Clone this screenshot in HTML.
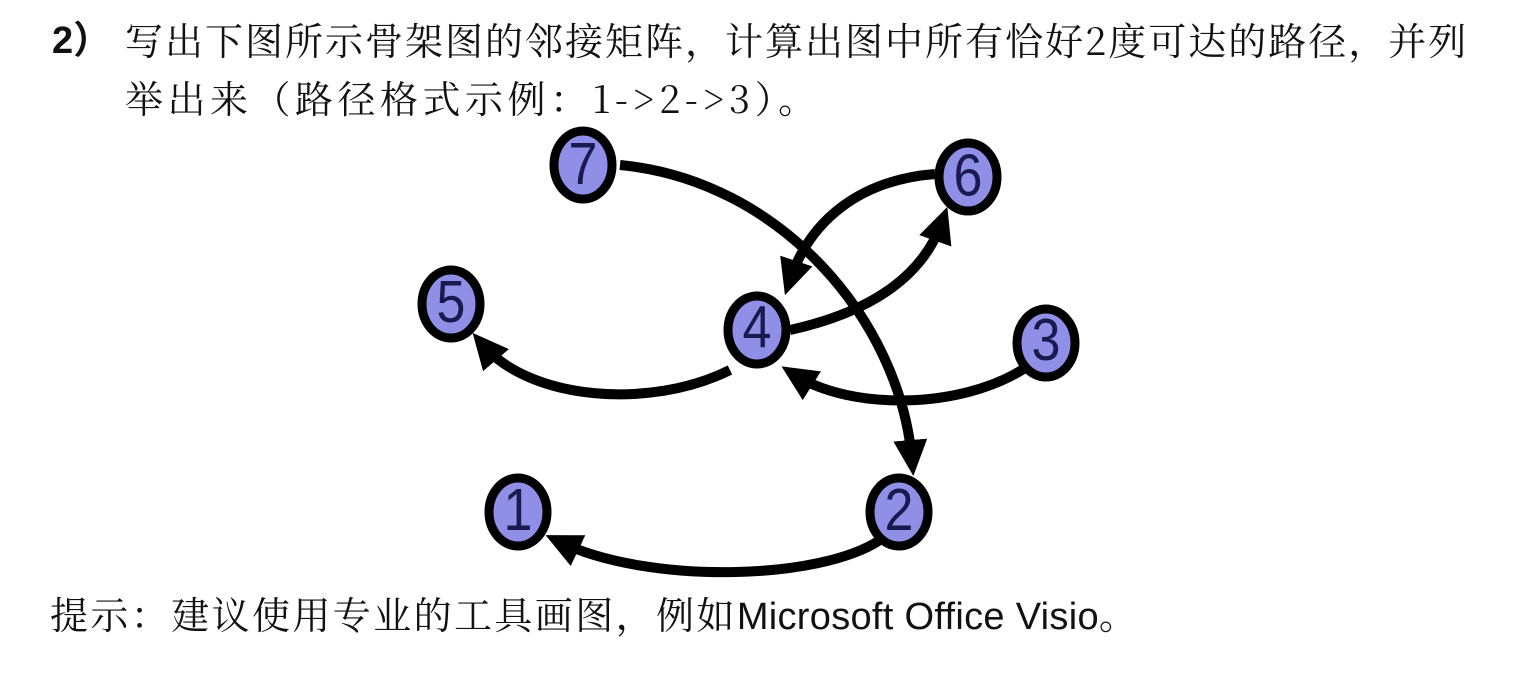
<!DOCTYPE html>
<html><head><meta charset="utf-8"><style>
html,body{margin:0;padding:0;background:#fff;width:1520px;height:676px;overflow:hidden}
.t{position:absolute;white-space:nowrap;font-size:38px;line-height:38px;color:#111;font-family:"Noto Serif CJK SC",serif}
.s{font-family:"Liberation Sans","Noto Sans CJK SC",sans-serif;font-weight:bold}
.l{font-family:"Liberation Sans",sans-serif;font-size:38px;letter-spacing:0.3px}
</style></head><body>
<div class="t s" style="left:52px;top:22px">2）</div>
<div class="t" style="left:125px;top:20px;letter-spacing:2px">写出下图所示骨架图的邻接矩阵，计算出图中所有恰好2度可达的路径，并列</div>
<div class="t" style="left:125px;top:78px;letter-spacing:4.5px">举出来（路径格式示例：1-&gt;2-&gt;3）。</div>
<div class="t" style="left:50px;top:594px;letter-spacing:2.4px">提示：建议使用专业的工具画图，例如<span class="l">Microsoft Office Visio</span>。</div>
<svg style="position:absolute;left:0;top:0" width="1520" height="676">
<defs><marker id="a" markerWidth="4" markerHeight="4" refX="2" refY="2" orient="auto" markerUnits="strokeWidth"><path d="M0,0.3 L3.6,2 L0,3.7 Z" fill="#000"/></marker></defs>
<g fill="none" stroke="#000" stroke-width="10">
<path d="M620,165 C780,180 900,320 912,460" marker-end="url(#a)"/>
<path d="M790,330 C880,310 925,270 942,222" marker-end="url(#a)"/>
<path d="M935,174 C860,180 810,220 790,280" marker-end="url(#a)"/>
<path d="M730,370 C650,410 530,400 483,345" marker-end="url(#a)"/>
<path d="M1025,368 C960,410 850,410 795,375" marker-end="url(#a)"/>
<path d="M880,540 C820,580 650,585 560,542" marker-end="url(#a)"/>
</g>
<g fill="#8f8fe8" stroke="#000" stroke-width="9">
<ellipse cx="583" cy="165" rx="29" ry="34"/>
<ellipse cx="968" cy="177" rx="29" ry="34"/>
<ellipse cx="451" cy="304" rx="29" ry="34"/>
<ellipse cx="757" cy="330" rx="29" ry="34"/>
<ellipse cx="1046" cy="343" rx="29" ry="34"/>
<ellipse cx="518" cy="512" rx="29" ry="34"/>
<ellipse cx="899" cy="512" rx="29" ry="34"/>
</g>
<g font-family="Liberation Sans,sans-serif" font-size="52" fill="#1a1a50" text-anchor="middle" transform="scale(1,1.15)">
<text x="583" y="160">7</text><text x="968" y="170">6</text><text x="451" y="280">5</text>
<text x="757" y="302">4</text><text x="1046" y="313">3</text><text x="518" y="461">1</text><text x="899" y="461">2</text>
</g>
</svg>
</body></html>
